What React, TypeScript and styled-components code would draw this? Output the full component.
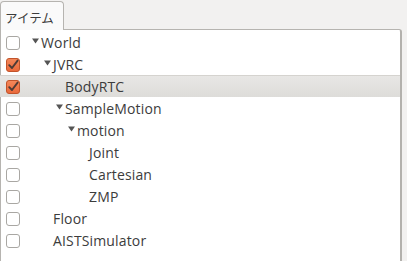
import React from "react";
import styled, { createGlobalStyle } from "styled-components";

const Global = createGlobalStyle`
  html, body { margin: 0; padding: 0; background: #f2f1f0; }
  body { font-family: "Open Sans", "Noto Sans CJK JP", sans-serif; color: #3c3c3c; }
`;

const Screen = styled.div`
  width: 407px;
  height: 261px;
  overflow: hidden;
  background: #f2f1f0;
  display: flex;
  flex-direction: column;
`;

const TabBar = styled.div`
  display: flex;
  height: 29px;
  align-items: flex-end;
`;

const Tab = styled.div`
  box-sizing: border-box;
  width: 64px;
  height: 29px;
  margin-bottom: -1px;
  position: relative;
  z-index: 1;
  border: 1px solid #b6b4b0;
  border-bottom: none;
  border-radius: 4px 4px 0 0;
  background: #fafafa;
  font-family: "Noto Sans CJK JP", sans-serif;
  font-size: 12.5px;
  color: #3c3c3c;
  display: flex;
  align-items: center;
  padding-left: 4px;
  padding-top: 2px;
`;

const Panel = styled.div`
  flex: 1;
  margin-right: 5px;
  background: #ffffff;
  border: 1px solid #b6b4b0;
  border-right: 2px solid #b3b1ad;
  border-bottom: none;
  border-radius: 0 3px 0 0;
  padding-top: 1px;
  display: flex;
  flex-direction: column;
`;

const Row = styled.div<{ $selected?: boolean }>`
  box-sizing: border-box;
  height: 22px;
  display: flex;
  align-items: center;
  background: ${(p) =>
    p.$selected ? "linear-gradient(#e8e7e5, #dddcd9)" : "transparent"};
  border-top: 1px solid ${(p) => (p.$selected ? "#d5d3cf" : "transparent")};
  margin-left: -1px;
`;

const CheckCell = styled.div`
  width: 29px;
  padding-left: 6px;
  box-sizing: border-box;
  display: flex;
  align-items: center;
`;

const Indent = styled.div<{ $level: number }>`
  width: ${(p) => p.$level * 12}px;
  flex: none;
`;

const Expander = styled.div`
  width: 12px;
  height: 22px;
  flex: none;
  display: flex;
  align-items: center;
  padding-left: 3px;
  box-sizing: border-box;
`;

const Label = styled.span`
  font-size: 14px;
  letter-spacing: 0.15px;
  color: #3c3c3c;
  white-space: nowrap;
  line-height: 22px;
`;

const Box = ({ checked }: { checked?: boolean }) =>
  checked ? (
    <svg width="14" height="14" viewBox="0 0 14 14">
      <defs>
        <linearGradient id="og" x1="0" y1="0" x2="0" y2="1">
          <stop offset="0" stopColor="#f4885a" />
          <stop offset="1" stopColor="#e9683a" />
        </linearGradient>
      </defs>
      <rect x="0.5" y="0.5" width="13" height="13" rx="2.5" fill="url(#og)" stroke="#c2542b" />
      <path d="M3.2 7.2 L6 10 L11.6 2.6" fill="none" stroke="#4d3b36" strokeWidth="1.9" strokeLinecap="round" strokeLinejoin="round" />
    </svg>
  ) : (
    <svg width="14" height="14" viewBox="0 0 14 14">
      <rect x="0.5" y="0.5" width="13" height="13" rx="2.5" fill="#ffffff" stroke="#a9a7a3" />
    </svg>
  );

const Triangle = () => (
  <svg width="7" height="6" viewBox="0 0 7 6" style={{ marginTop: -3 }}>
    <path d="M0 0.5 L7 0.5 L3.5 5.5 Z" fill="#555555" />
  </svg>
);

type Item = {
  label: string;
  level: number;
  expanded?: boolean;
  checked?: boolean;
  selected?: boolean;
};

const items: Item[] = [
  { label: "World", level: 0, expanded: true },
  { label: "JVRC", level: 1, expanded: true, checked: true },
  { label: "BodyRTC", level: 2, checked: true, selected: true },
  { label: "SampleMotion", level: 2, expanded: true },
  { label: "motion", level: 3, expanded: true },
  { label: "Joint", level: 4 },
  { label: "Cartesian", level: 4 },
  { label: "ZMP", level: 4 },
  { label: "Floor", level: 1 },
  { label: "AISTSimulator", level: 1 },
];

export default function App() {
  return (
    <Screen>
      <Global />
      <TabBar>
        <Tab>アイテム</Tab>
      </TabBar>
      <Panel>
        {items.map((it) => (
          <Row key={it.label} $selected={it.selected}>
            <CheckCell>
              <Box checked={it.checked} />
            </CheckCell>
            <Indent $level={it.level} />
            <Expander>{it.expanded ? <Triangle /> : null}</Expander>
            <Label>{it.label}</Label>
          </Row>
        ))}
      </Panel>
    </Screen>
  );
}
